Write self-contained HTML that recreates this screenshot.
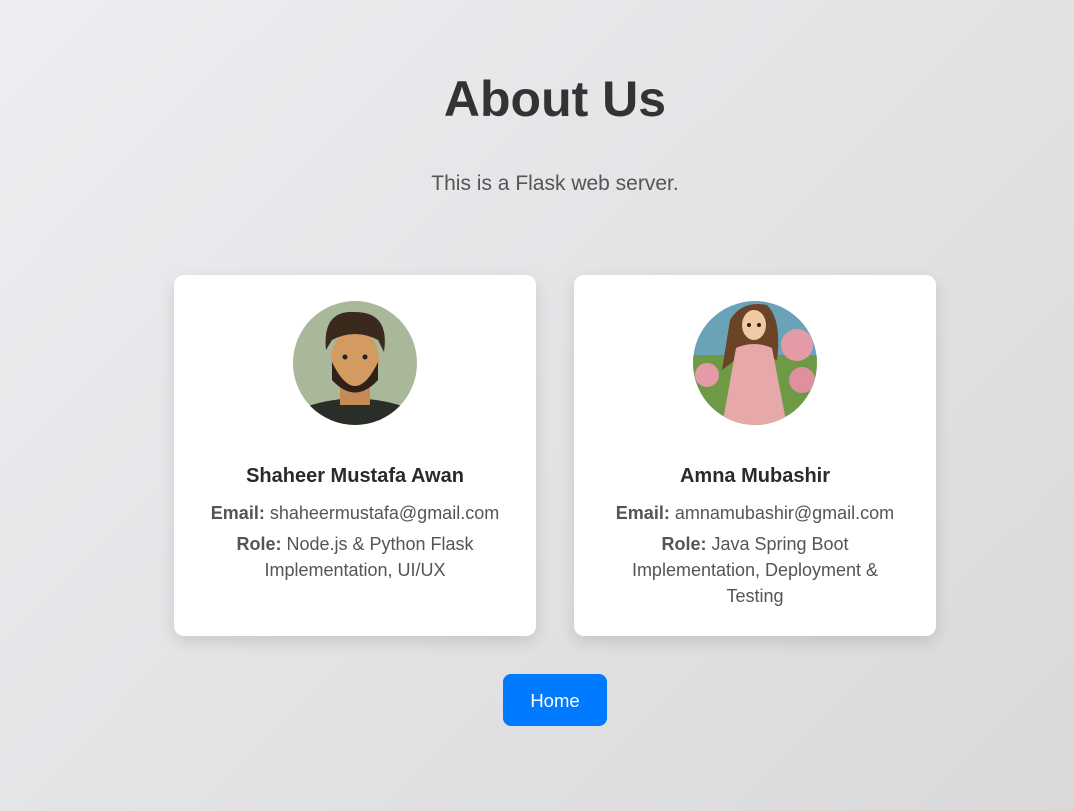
<!DOCTYPE html>
<html><head><meta charset="utf-8"><style>
html,body{margin:0;padding:0}
body{width:1074px;height:811px;overflow:hidden;background:linear-gradient(135deg,#eceef1 0%,#d9d9da 100%);font-family:"Liberation Sans",sans-serif;color:#333;text-align:center;position:relative}
h1{position:absolute;top:70px;left:36px;right:0;margin:0;font-size:50px;font-weight:bold;color:#333}
.sub{position:absolute;top:172px;left:36px;right:0;font-size:21px;color:#555;margin:0}
.card{position:absolute;top:275px;width:362px;height:361px;background:#fff;border-radius:10px;box-shadow:0 6px 16px rgba(0,0,0,.12)}
.card svg{position:absolute;left:118px;top:25px}
.name{position:absolute;top:190px;left:0;right:0;font-size:20px;font-weight:bold;color:#2a2a2a}
.info{position:absolute;top:225px;left:30px;right:30px;font-size:18px;color:#555;line-height:26px}
.role{margin-top:5px;padding:0 12px}
.info b{color:#555}
.btn{position:absolute;left:503px;top:674px;width:104px;height:52px;background:#007bff;border-radius:8px;color:#fff;font-size:18.5px;line-height:54px}
</style></head><body>
<h1>About Us</h1>
<p class="sub">This is a Flask web server.</p>
<div class="card" style="left:174px">
<svg width="126" height="126" viewBox="0 0 126 126"><defs><clipPath id="c1"><circle cx="63" cy="63" r="62"/></clipPath></defs>
<g clip-path="url(#c1)"><rect width="126" height="126" fill="#a9b89b"/>
<path d="M0 112 Q63 85 126 112 V126 H0Z" fill="#2a2e28"/>
<rect x="48" y="80" width="30" height="25" fill="#c68a55"/>
<ellipse cx="63" cy="60" rx="24" ry="30" fill="#d39a62"/>
<path d="M40 62 Q63 110 86 62 L86 80 Q63 105 40 80Z" fill="#2e2118"/>
<path d="M34 50 Q30 10 63 12 Q98 12 92 52 L86 40 Q63 28 40 40Z" fill="#3a2a1e"/>
<circle cx="53" cy="57" r="2.5" fill="#222"/><circle cx="73" cy="57" r="2.5" fill="#222"/></g></svg>
<div class="name">Shaheer Mustafa Awan</div>
<div class="info"><div><b>Email:</b> shaheermustafa@gmail.com</div><div class="role"><b>Role:</b> Node.js &amp; Python Flask Implementation, UI/UX</div></div>
</div>
<div class="card" style="left:574px">
<svg width="126" height="126" viewBox="0 0 126 126"><defs><clipPath id="c2"><circle cx="63" cy="63" r="62"/></clipPath></defs>
<g clip-path="url(#c2)"><rect width="126" height="60" fill="#6aa3b8"/><rect y="55" width="126" height="71" fill="#6f9a45"/>
<circle cx="105" cy="45" r="16" fill="#e59aa8"/><circle cx="110" cy="80" r="13" fill="#e08f9f"/><circle cx="15" cy="75" r="12" fill="#e59aa8"/>
<path d="M38 20 Q50 0 75 5 Q90 20 85 60 L70 55 L50 55 L30 70Z" fill="#6b4327"/>
<ellipse cx="62" cy="25" rx="12" ry="15" fill="#f1c9a3"/>
<path d="M44 48 Q62 40 80 48 L95 126 H30Z" fill="#e6a8a8"/>
<circle cx="57" cy="25" r="2" fill="#222"/><circle cx="67" cy="25" r="2" fill="#222"/></g></svg>
<div class="name">Amna Mubashir</div>
<div class="info"><div><b>Email:</b> amnamubashir@gmail.com</div><div class="role" style="padding:0 14px"><b>Role:</b> Java Spring Boot Implementation, Deployment &amp; Testing</div></div>
</div>
<div class="btn">Home</div>
</body></html>
